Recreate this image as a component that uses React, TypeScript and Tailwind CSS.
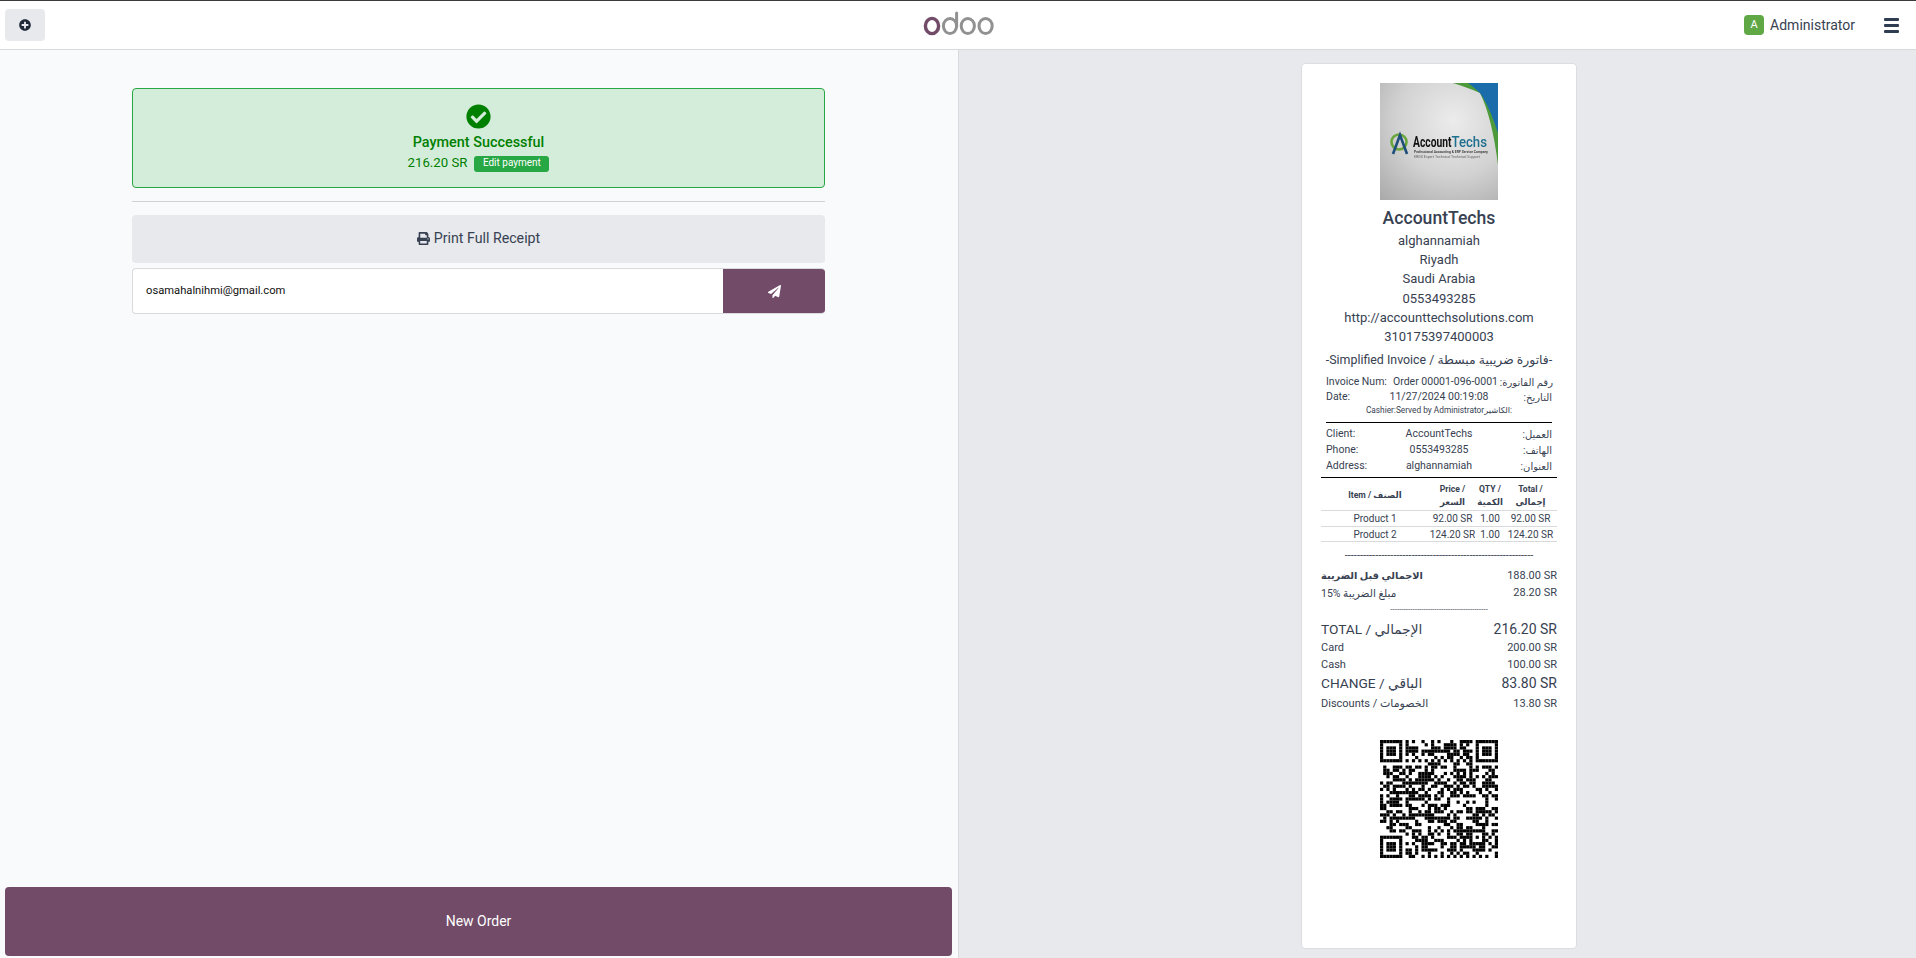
import React from "react";
import { FaCheckCircle, FaPrint, FaPaperPlane, FaPlusCircle } from "react-icons/fa";

const font = { fontFamily: '"Roboto", "DejaVu Sans", sans-serif' };

function OdooLogo() {
  return (
    <svg width="72" height="26" viewBox="0 0 72 26" fill="none">
      <ellipse cx="9" cy="16" rx="6.6" ry="7.6" stroke="#714B67" strokeWidth="3.4" />
      <ellipse cx="27" cy="16" rx="6.6" ry="7.6" stroke="#919191" strokeWidth="3" />
      <path d="M33.6 3v13" stroke="#919191" strokeWidth="3" strokeLinecap="round" />
      <ellipse cx="44.8" cy="16" rx="6.6" ry="7.6" stroke="#919191" strokeWidth="3" />
      <ellipse cx="62.6" cy="16" rx="6.6" ry="7.6" stroke="#919191" strokeWidth="3" />
    </svg>
  );
}

function CompanyLogo() {
  return (
    <svg width="118" height="117" viewBox="0 0 118 117" className="block blur-[0.35px]">
      <defs>
        <radialGradient id="bg" cx="0.62" cy="0.32" r="0.95">
          <stop offset="0" stopColor="#ececec" />
          <stop offset="0.5" stopColor="#d2d2d2" />
          <stop offset="1" stopColor="#a6a6a6" />
        </radialGradient>
      </defs>
      <rect width="118" height="117" fill="url(#bg)" />
      <path d="M73 0 L118 0 L118 82 C114 50 108 26 100 10 C92 6 82 3 73 0Z" fill="#4d9a3a" />
      <path d="M88 0 L118 0 L118 50 C112 32 107 20 100 10 C96 6 92 3 88 0Z" fill="#1b6cab" />
      <circle cx="19" cy="59" r="7.5" fill="none" stroke="#6aa63b" strokeWidth="2.6" />
      <path d="M13 71 L20 52 L27 71" fill="none" stroke="#1d4f7a" strokeWidth="2.6" />
      <text x="33" y="64" fontFamily="Roboto" fontWeight="700" fontSize="15" fill="#111" textLength="38.5" lengthAdjust="spacingAndGlyphs">Account</text>
      <text x="71.5" y="64" fontFamily="Roboto" fontWeight="500" fontSize="15" fill="#1f6f8f" textLength="35.5" lengthAdjust="spacingAndGlyphs">Techs</text>
      <text x="34" y="70" fontFamily="Roboto" fontWeight="700" fontSize="3.6" fill="#444" textLength="74" lengthAdjust="spacingAndGlyphs">Professional Accounting &amp; ERP Service Company</text>
      <text x="34" y="75" fontFamily="Roboto" fontSize="3.4" fill="#666" textLength="66" lengthAdjust="spacingAndGlyphs">ERGX Expert Technical Technical Support</text>
    </svg>
  );
}

function QrCode() {
  const n = 37;
  const rects: React.ReactNode[] = [];
  let seed = 73921;
  const rnd = () => {
    seed = (seed * 1103515245 + 12345) & 0x7fffffff;
    return (seed >> 16) & 1;
  };
  const inFinder = (x: number, y: number) =>
    (x < 8 && y < 8) || (x >= n - 8 && y < 8) || (x < 8 && y >= n - 8);
  const finder = (x: number, y: number) => {
    const lx = x >= n - 8 ? x - (n - 7) : x;
    const ly = y >= n - 8 ? y - (n - 7) : y;
    if (lx < 0 || ly < 0 || lx > 6 || ly > 6) return false;
    return lx === 0 || ly === 0 || lx === 6 || ly === 6 || (lx >= 2 && lx <= 4 && ly >= 2 && ly <= 4);
  };
  for (let y = 0; y < n; y++) {
    for (let x = 0; x < n; x++) {
      let on = false;
      if (inFinder(x, y)) on = finder(x, y);
      else if (x === 6 || y === 6) on = (x + y) % 2 === 0;
      else if (x >= 28 && x <= 32 && y >= 28 && y <= 32)
        on = x === 28 || x === 32 || y === 28 || y === 32 || (x === 30 && y === 30);
      else on = rnd() === 1;
      if (on) rects.push(<rect key={x + "-" + y} x={x} y={y} width="1" height="1" fill="#000" />);
    }
  }
  return (
    <svg width="118" height="118" viewBox="0 0 37 37" className="block">
      {rects}
    </svg>
  );
}

function InfoRow({ left, mid, right, cols, h }: { left: string; mid: string; right: string; cols: string; h: string }) {
  return (
    <div className={"grid items-center text-[10.5px] text-[#374151] whitespace-nowrap " + cols + " " + h}>
      <div>{left}</div>
      <div className="text-center">{mid}</div>
      <div className="text-right text-[10px]" dir="rtl">{right}</div>
    </div>
  );
}

function ItemRow({ name, price, qty, total, cls }: { name: string; price: string; qty: string; total: string; cls: string }) {
  return (
    <div className={"grid grid-cols-[108px_47px_28px_53px] items-center text-center text-[10px] text-[#374151] border-b border-[#d8dadd] whitespace-nowrap pb-[2px] " + cls}>
      <div>{name}</div>
      <div className="flex justify-center">{price}</div>
      <div>{qty}</div>
      <div className="flex justify-center">{total}</div>
    </div>
  );
}

function SumRow({ left, right, cls, h, labelCls }: { left: string; right: string; cls: string; h: string; labelCls?: string }) {
  return (
    <div className={"flex justify-between items-center " + cls + " " + h}>
      <span className={labelCls}>{left}</span>
      <span className="font-normal">{right}</span>
    </div>
  );
}

export default function App() {
  return (
    <div style={font} className="h-[958px] w-[1916px] flex flex-col overflow-hidden bg-white text-[#374151]">
      <header className="h-[50px] shrink-0 border-t border-t-[#3a3a3a] border-b border-b-[#d8dadd] bg-white flex items-center justify-between relative pl-[5px] pr-[17px]">
        <button className="w-[40px] h-[32px] rounded-[4px] bg-[#e7e9ed] flex items-center justify-center text-[#1f2937]">
          <FaPlusCircle size={12} />
        </button>
        <div className="absolute left-[923px] top-[9px]">
          <OdooLogo />
        </div>
        <div className="flex items-center">
          <div className="w-[20px] h-[20px] rounded-[4px] bg-[#5fa845] text-white text-[11px] flex items-center justify-center">A</div>
          <span className="ml-[6px] text-[14px] text-[#374151]">Administrator</span>
          <div className="ml-[29px] w-[15px] flex flex-col gap-[3px]">
            <span className="block h-[3px] bg-[#2f3d52] rounded-[1px]" />
            <span className="block h-[3px] bg-[#2f3d52] rounded-[1px]" />
            <span className="block h-[3px] bg-[#2f3d52] rounded-[1px]" />
          </div>
        </div>
      </header>
      <main className="flex-1 flex min-h-0">
        <section className="w-[959px] shrink-0 bg-[#f9fafb] border-r border-[#d8dadd] flex flex-col pl-[5px] pr-[6px] pb-[2px]">
          <div className="w-[693px] ml-[127px] mt-[38px]">
            <div className="h-[100px] border border-[#28a745] rounded-[4px] bg-[#d4edda] flex flex-col items-center text-[#008000]">
              <FaCheckCircle size={25} className="mt-[15px]" />
              <div className="mt-[4px] text-[14.4px] font-medium leading-[20px]">Payment Successful</div>
              <div className="flex items-center text-[13.2px] leading-[20px]">
                <span>216.20 SR</span>
                <span className="ml-[7px] mt-[1px] h-[16px] px-[8.5px] rounded-[3px] bg-[#28a745] text-white text-[10px] leading-[14px]">Edit payment</span>
              </div>
            </div>
            <div className="mt-[13px] border-t border-[#cfd1d4]" />
            <button className="mt-[13px] w-full h-[48px] bg-[#e7e9ed] rounded-[4px] flex items-center justify-center text-[14.2px] text-[#374151]">
              <FaPrint size={13} className="mr-[4px] -mt-[1px]" />
              Print Full Receipt
            </button>
            <div className="mt-[5px] h-[46px] flex rounded-[4px] overflow-hidden border-y border-l border-[#d8dadd] bg-white">
              <div className="flex-1 flex items-center pl-[13px] text-[11.2px] text-[#111111]">osamahalnihmi@gmail.com</div>
              <div className="w-[102px] -my-px bg-[#714b67] flex items-center justify-center text-white">
                <FaPaperPlane size={13} />
              </div>
            </div>
          </div>
          <button className="mt-auto h-[69px] rounded-[4px] bg-[#714b67] text-white text-[14px] flex items-center justify-center">
            New Order
          </button>
        </section>
        <section className="flex-1 bg-[#e7e9ed] pl-[342px] pt-[13px]">
          <div className="w-[276px] h-[886px] bg-white border border-[#dcdde0] rounded-[4px] flex flex-col">
            <div className="mx-[19px] flex flex-col items-center text-[13px] leading-[19.2px] text-center pt-[19px]">
              <CompanyLogo />
              <div className="mt-[6px] text-[17.6px] leading-[24px] font-medium text-[#374151]">AccountTechs</div>
              <div className="mt-[1px]">alghannamiah</div>
              <div>Riyadh</div>
              <div>Saudi Arabia</div>
              <div>0553493285</div>
              <div>http://accounttechsolutions.com</div>
              <div>310175397400003</div>
            </div>
            <div className="mt-[5px] text-center text-[12.4px] leading-[18px] whitespace-nowrap" dir="rtl">-فاتورة ضريبية مبسطة / Simplified Invoice-</div>
            <div className="mx-[24px] mt-[5px]">
              <InfoRow cols="grid-cols-[67px_1fr_55px]" h="h-[15px]" left="Invoice Num:" mid="Order 00001-096-0001" right="رقم الفاتورة:" />
              <InfoRow cols="grid-cols-[55px_1fr_55px]" h="h-[15px]" left="Date:" mid="11/27/2024 00:19:08" right="التاريخ:" />
              <div className="text-center text-[8.3px] leading-[13px] whitespace-nowrap">Cashier:Served by Administratorالكاشير:</div>
              <div className="mt-[5px] border-t border-black" />
              <div className="mt-[3px]">
                <InfoRow cols="grid-cols-[55px_1fr_55px]" h="h-4" left="Client:" mid="AccountTechs" right="العميل:" />
                <InfoRow cols="grid-cols-[55px_1fr_55px]" h="h-4" left="Phone:" mid="0553493285" right="الهاتف:" />
                <InfoRow cols="grid-cols-[55px_1fr_55px]" h="h-4" left="Address:" mid="alghannamiah" right="العنوان:" />
              </div>
            </div>
            <div className="mx-[19px] mt-[3px] border-t border-black">
              <div className="grid grid-cols-[108px_47px_28px_53px] h-[33px] pt-[3px] items-center text-center text-[8.6px] leading-[13px] font-bold border-b border-[#d8dadd]">
                <div>Item / الصنف</div>
                <div>Price /<br />السعر</div>
                <div>QTY /<br />الكمية</div>
                <div>Total /<br />إجمالي</div>
              </div>
              <ItemRow cls="h-[16px]" name="Product 1" price="92.00 SR" qty="1.00" total="92.00 SR" />
              <ItemRow cls="h-[15px]" name="Product 2" price="124.20 SR" qty="1.00" total="124.20 SR" />
              <div className="mt-[8px] text-center text-[11px] leading-[12px] whitespace-nowrap overflow-hidden">--------------------------------------------------------------</div>
              <div className="mt-[6px]">
                <SumRow left="الاجمالي قبل الضريبة" labelCls="text-[9.8px]" right="188.00 SR" cls="text-[11px] font-bold" h="h-[17px]" />
                <SumRow left="15% مبلغ الضريبة" labelCls="text-[10.5px]" right="28.20 SR" cls="text-[11px]" h="h-[17px]" />
                <div className="mt-[4px] mb-[5px] h-[8px] text-center text-[8px] leading-[8px] whitespace-nowrap overflow-hidden">--------------------------------------------</div>
                <SumRow left="TOTAL / الإجمالي" labelCls="text-[13.7px]" right="216.20 SR" cls="text-[14px]" h="h-[21px]" />
                <SumRow left="Card" right="200.00 SR" cls="text-[11px]" h="h-[17px]" />
                <SumRow left="Cash" right="100.00 SR" cls="text-[11px]" h="h-[16px]" />
                <SumRow left="CHANGE / الباقي" labelCls="text-[13.7px]" right="83.80 SR" cls="text-[14px] mb-[3px]" h="h-[20px]" />
                <SumRow left="Discounts / الخصومات" right="13.80 SR" cls="text-[11px]" h="h-[17px]" />
              </div>
            </div>
            <div className="mt-[27px] flex justify-center">
              <QrCode />
            </div>
          </div>
        </section>
      </main>
    </div>
  );
}
